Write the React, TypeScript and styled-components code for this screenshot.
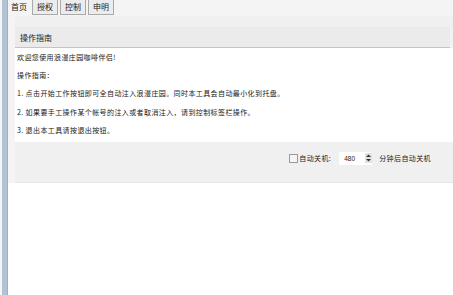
import React from "react";
import styled, { createGlobalStyle } from "styled-components";

const Global = createGlobalStyle`
  html, body { margin: 0; padding: 0; background: #ffffff; }
  body { font-family: "Noto Sans CJK SC", "Liberation Sans", sans-serif; color: #1a1a1a; }
`;

const Window = styled.div`
  width: 453px;
  height: 295px;
  display: flex;
  overflow: hidden;
  background: #ffffff;
`;

const Side = styled.div`
  width: 8px;
  flex: none;
  display: flex;
  padding-left: 2px;
  box-sizing: border-box;
  background: #f6f6f6;
`;

const SideBar = styled.div`
  width: 5px;
  background: #b3c3d6;
  border-right: 1px solid #9fb1c7;
`;

const Main = styled.div`
  flex: 1;
  display: flex;
  flex-direction: column;
`;

const TabBar = styled.div`
  height: 16px;
  display: flex;
  align-items: flex-start;
  gap: 2px;
  background: #f4f4f4;
`;

const Tab = styled.div<{ $active?: boolean }>`
  height: ${(p) => (p.$active ? 16 : 15)}px;
  padding: 0 ${(p) => (p.$active ? 2 : 4)}px;
  box-sizing: border-box;
  font-size: 8px;
  line-height: 14px;
  border: 1px solid ${(p) => (p.$active ? "transparent" : "#a9a9a9")};
  border-top: none;
  background: ${(p) => (p.$active ? "#f4f4f4" : "#ececec")};
`;

const Page = styled.div`
  display: flex;
  background: #f2f2f2;
`;

const Gutter = styled.div`
  width: 7px;
  flex: none;
  background: #f4f4f4;
`;

const Content = styled.div`
  flex: 1;
  display: flex;
  flex-direction: column;
`;

const GroupTop = styled.div`
  height: 11px;
  background: #f0f0f0;
`;

const GroupHeader = styled.div`
  height: 20px;
  margin-right: 3px;
  padding-left: 5px;
  display: flex;
  align-items: center;
  font-size: 8px;
  background: #ebebeb;
  border-bottom: 1px solid #c4c4c4;
`;

const TextPanel = styled.div`
  background: #ffffff;
  padding: 3px 0 0 2px;
  height: 94px;
  box-sizing: border-box;
  display: flex;
  flex-direction: column;
  align-items: flex-start;
`;

const Line = styled.div`
  font-size: 7px;
  letter-spacing: 0.4px;
  height: 19.7px;
  line-height: 12px;
  white-space: nowrap;
`;

const Options = styled.div`
  height: 41px;
  display: flex;
  align-items: center;
  justify-content: flex-end;
  padding-right: 22px;
  padding-bottom: 8px;
  box-sizing: border-box;
  font-size: 7px;
  letter-spacing: 0.4px;
  border-bottom: 1px solid #e6e6e6;
  background: #f0f0f0;
`;

const Check = styled.span`
  width: 7px;
  height: 7px;
  border: 1px solid #9a9a9a;
  background: #f4f4f4;
  margin-right: 1px;
`;

const Label = styled.span`
  margin-right: 8px;
`;

const NumBox = styled.div`
  width: 33px;
  height: 13px;
  display: flex;
  align-items: center;
  justify-content: space-between;
  background: #ffffff;
  padding-left: 5px;
  box-sizing: border-box;
  font-family: "Liberation Sans", sans-serif;
  font-size: 6.5px;
  letter-spacing: 0;
  margin-right: 7px;
`;

const Spin = styled.svg`
  width: 7px;
  height: 10px;
`;

const Footer = styled.div`
  flex: 1;
  background: #ffffff;
`;

const lines = [
  "欢迎您使用浪漫庄园咖啡伴侣!",
  "操作指南：",
  "1. 点击开始工作按钮即可全自动注入浪漫庄园。同时本工具会自动最小化到托盘。",
  "2. 如果要手工操作某个帐号的注入或者取消注入，请到控制标签栏操作。",
  "3. 退出本工具请按退出按钮。",
];

export default function App() {
  return (
    <Window>
      <Global />
      <Side>
        <SideBar />
      </Side>
      <Main>
        <TabBar>
          <Tab $active>首页</Tab>
          <Tab>授权</Tab>
          <Tab>控制</Tab>
          <Tab>申明</Tab>
        </TabBar>
        <Page>
          <Gutter />
          <Content>
            <GroupTop />
            <GroupHeader>操作指南</GroupHeader>
            <TextPanel>
              {lines.map((l, i) => (
                <Line key={i}>{l}</Line>
              ))}
            </TextPanel>
            <Options>
              <Check />
              <Label>自动关机:</Label>
              <NumBox>
                480
                <Spin viewBox="0 0 7 10">
                  <rect x="0" y="0" width="7" height="10" fill="#e2e2e2" />
                  <path d="M3.5 1.5 L6 4 L1 4 Z" fill="#333" />
                  <path d="M3.5 8.5 L6 6 L1 6 Z" fill="#333" />
                </Spin>
              </NumBox>
              <span>分钟后自动关机</span>
            </Options>
          </Content>
        </Page>
        <Footer />
      </Main>
    </Window>
  );
}
